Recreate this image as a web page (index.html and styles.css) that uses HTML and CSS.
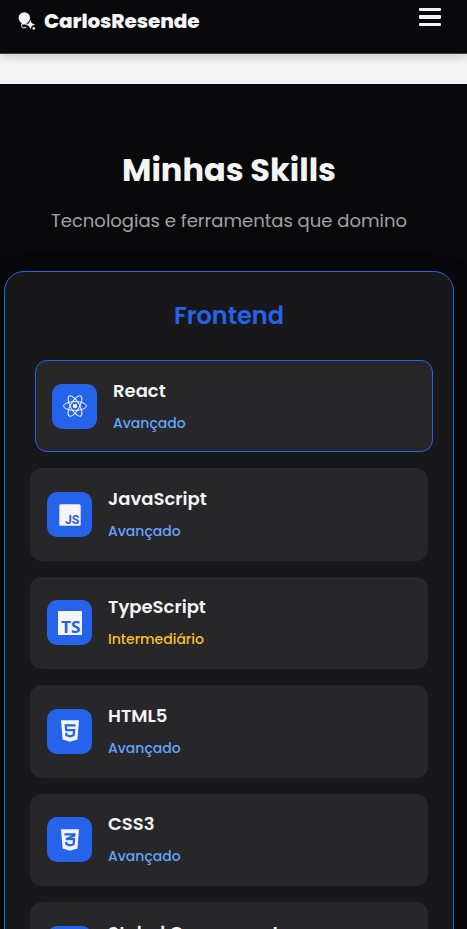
FILE: index.html
```html
<!DOCTYPE html>
<html lang="pt-BR">
<head>
<meta charset="utf-8">
<title>Carlos Resende</title>
<link rel="stylesheet" href="styles.css">
</head>
<body>
<header class="header">
  <a class="brand"><svg class="brand-icon" viewBox="0 0 18 18"><circle cx="6.3" cy="5.9" r="5.7"/><path d="M2.5 9H10L8.2 12.4H4.4Z"/><path d="M3.8 11.5V14.6Q4.2 16.3 6 16L8.3 15" class="brand-stem"/><path d="M12.4 7.9 13.8 11.2 17.1 12.6 13.8 14 12.4 17.3 11 14 7.7 12.6 11 11.2Z"/><circle cx="15.8" cy="16.4" r="1.3"/></svg><span class="brand-name">CarlosResende</span></a>
  <button class="menu" aria-label="Menu"><i></i><i></i><i></i></button>
</header>
<main class="skills">
  <h1 class="title">Minhas Skills</h1>
  <p class="subtitle">Tecnologias e ferramentas que domino</p>
  <section class="category">
    <h2 class="category-title">Frontend</h2>
    <div class="list">
      <article class="skill active">
        <div class="icon"><svg viewBox="0 0 24 24"><g class="orbit"><ellipse cx="12" cy="12" rx="11.5" ry="4.4"/><ellipse cx="12" cy="12" rx="11.5" ry="4.4" transform="rotate(60 12 12)"/><ellipse cx="12" cy="12" rx="11.5" ry="4.4" transform="rotate(120 12 12)"/></g><circle cx="12" cy="12" r="2.2"/></svg></div>
        <div><h3 class="name">React</h3><p class="level">Avançado</p></div>
      </article>
      <article class="skill">
        <div class="icon"><svg viewBox="0 0 24 24"><rect x="1.3" y="1.3" width="21.4" height="21.4" rx="1.5"/><text class="mark js" x="7" y="20.8" font-size="13.5" textLength="14.4" lengthAdjust="spacingAndGlyphs">JS</text></svg></div>
        <div><h3 class="name">JavaScript</h3><p class="level">Avançado</p></div>
      </article>
      <article class="skill">
        <div class="icon"><svg viewBox="0 0 24 24"><path d="M0 0H24V24H0Z"/><text class="mark" x="3" y="21.7" font-size="16.5" textLength="19.5" lengthAdjust="spacingAndGlyphs">TS</text></svg></div>
        <div><h3 class="name">TypeScript</h3><p class="level medium">Intermediário</p></div>
      </article>
      <article class="skill">
        <div class="icon"><svg viewBox="0 0 24 24"><path d="M3 1.2H21L19.4 20.4 12 22.7 4.6 20.4Z"/><path class="cut" d="M17.6 6.4H7.7L8.2 11.2H16.2L15.6 16.2 12 17.3 8.4 16.2 8.2 13.8"/></svg></div>
        <div><h3 class="name">HTML5</h3><p class="level">Avançado</p></div>
      </article>
      <article class="skill">
        <div class="icon"><svg viewBox="0 0 24 24"><path d="M3 1.2H21L19.4 20.4 12 22.7 4.6 20.4Z"/><path class="cut" d="M6.4 6.4H16.4V7.6L8 11.2H16.1L15.6 16.2 12 17.3 8.4 16.2 8.2 13.8"/></svg></div>
        <div><h3 class="name">CSS3</h3><p class="level">Avançado</p></div>
      </article>
      <article class="skill">
        <div class="icon"></div>
        <div><h3 class="name">Styled Components</h3><p class="level">Avançado</p></div>
      </article>
    </div>
  </section>
</main>
</body>
</html>
```
FILE: styles.css
```css
* { box-sizing: border-box; margin: 0; padding: 0; }
html { height: 929px; overflow: hidden; }
body {
  height: 929px;
  overflow: hidden;
  background: #f4f4f5;
  color: #f4f4f5;
  font-family: Poppins, Inter, "Open Sans", sans-serif;
}
.header {
  height: 54px;
  display: flex;
  justify-content: space-between;
  align-items: flex-start;
  padding: 7px 26px 0 18px;
  background: #09090b;
  border-bottom: 1px solid #3f3f46;
  box-shadow: 0 2px 10px rgba(0, 0, 0, .2);
}
.brand { display: flex; gap: 8px; align-items: center; height: 28px; }
.brand-icon { width: 18px; height: 18px; fill: #f4f4f5; }
.brand-stem { stroke: #f4f4f5; stroke-width: 1; fill: none; }
.brand-name { font-size: 20px; line-height: 28px; font-weight: 800; letter-spacing: -.1px; }
.menu { width: 22px; margin-top: .5px; border: 0; background: none; display: grid; gap: 4px; }
.menu i { height: 3.5px; background: #f4f4f5; border-radius: 1px; }
.skills {
  margin-top: 30px;
  padding: 60px 13px 0 4px;
  height: 845px;
  background: #09090b;
  overflow: hidden;
}
.title { text-align: center; font-size: 32px; line-height: 51px; font-weight: 700; white-space: nowrap; }
.subtitle { margin-top: 11px; text-align: center; color: #a1a1aa; font-size: 18px; line-height: 29px; white-space: nowrap; }
.category {
  margin-top: 36px;
  height: 900px;
  padding: 25px;
  background: #18181b;
  border: 1px solid #2563eb;
  border-radius: 20px;
  box-shadow: 0 10px 30px rgba(0, 0, 0, .3);
}
.category-title { text-align: center; color: #2563eb; font-size: 24px; line-height: 38px; font-weight: 600; }
.list { margin-top: 25px; display: grid; gap: 16px; }
.skill {
  height: 92.4px;
  display: flex;
  align-items: center;
  gap: 16px;
  padding: 16px;
  background: #27272a;
  border: 1px solid transparent;
  border-radius: 12px;
}
.skill.active { border-color: #2563eb; transform: translateX(5px); }
.icon { width: 45px; height: 45px; border-radius: 10px; background: #2563eb; display: grid; place-items: center; }
.icon svg { width: 24px; height: 24px; fill: #f4f4f5; }
.orbit { fill: none; stroke: #f4f4f5; stroke-width: 1; }
.mark { fill: #2563eb; font-family: "Open Sans", sans-serif; font-weight: 700; }
.mark.js { font-family: Roboto, sans-serif; }
.cut { fill: none; stroke: #2563eb; stroke-width: 2.2; }
.name { font-size: 18px; line-height: 28px; font-weight: 600; white-space: nowrap; }
.level { margin-top: 6px; font-size: 14px; line-height: 25px; font-weight: 500; color: #60a5fa; }
.level.medium { color: #fbbf24; }
```
